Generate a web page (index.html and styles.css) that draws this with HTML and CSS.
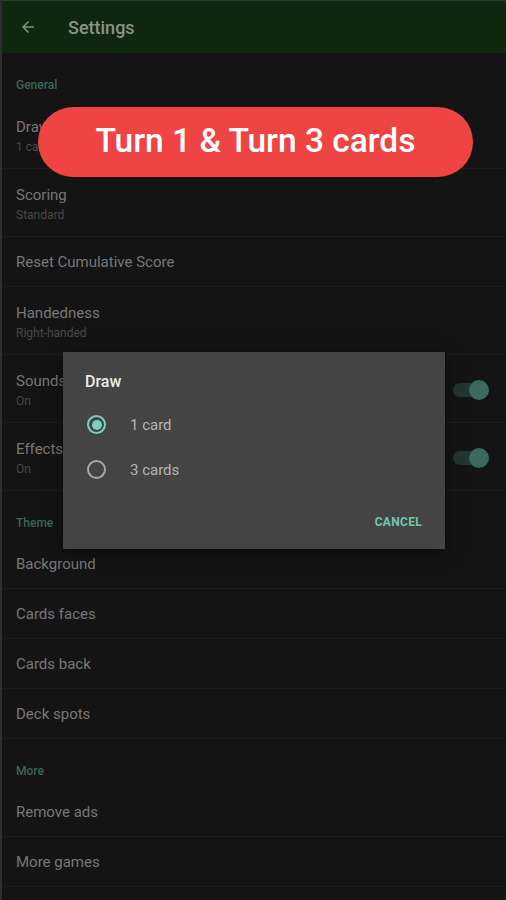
FILE: index.html
```html
<!DOCTYPE html>
<html>
<head>
<meta charset="utf-8">
<link rel="stylesheet" href="styles.css">
</head>
<body>
<div class="screen">
  <header class="appbar">
    <svg class="back" width="18" height="18" viewBox="0 0 24 24"><path d="M20 11H7.83l5.59-5.59L12 4l-8 8 8 8 1.41-1.41L7.83 13H20v-2z" fill="#7c947c"/></svg>
    <span class="title">Settings</span>
  </header>
  <main class="list">
    <div class="cat">General</div>
    <div class="item two"><div class="t">Draw</div><div class="s">1 card</div></div>
    <div class="item two"><div class="t">Scoring</div><div class="s">Standard</div></div>
    <div class="item one"><div class="t">Reset Cumulative Score</div></div>
    <div class="item two"><div class="t">Handedness</div><div class="s">Right-handed</div></div>
    <div class="item two sw"><div class="txt"><div class="t">Sounds</div><div class="s">On</div></div><div class="switch"><span class="knob"></span></div></div>
    <div class="item two sw"><div class="txt"><div class="t">Effects</div><div class="s">On</div></div><div class="switch"><span class="knob"></span></div></div>
    <div class="cat">Theme</div>
    <div class="item one"><div class="t">Background</div></div>
    <div class="item one"><div class="t">Cards faces</div></div>
    <div class="item one"><div class="t">Cards back</div></div>
    <div class="item one"><div class="t">Deck spots</div></div>
    <div class="cat">More</div>
    <div class="item one"><div class="t">Remove ads</div></div>
    <div class="item one"><div class="t">More games</div></div>
  </main>

  <div class="dialog">
    <div class="d-title">Draw</div>
    <div class="opt first"><span class="radio on"></span><span class="lbl">1 card</span></div>
    <div class="opt"><span class="radio"></span><span class="lbl">3 cards</span></div>
    <div class="actions"><span class="btn">CANCEL</span></div>
  </div>

  <div class="banner">Turn 1 &amp; Turn 3 cards</div>
</div>
</body>
</html>
```
FILE: styles.css
```css
* { box-sizing: border-box; }
html, body { margin: 0; padding: 0; background: #141414; }
body { font-family: Roboto, "Noto Sans", "Liberation Sans", sans-serif; }
.screen {
  position: relative;
  width: 506px;
  height: 900px;
  overflow: hidden;
  background: #141414;
  border-left: 2px solid #2e2e2e;
}
.appbar {
  height: 53px;
  background: #0f260f;
  border-top: 1px solid #2a3a2a;
  display: flex;
  align-items: center;
  padding-left: 17px;
}
.back { display: block; }
.appbar .title {
  margin-left: 31px;
  color: #869686;
  font-size: 18px;
  font-weight: 500;
}
.list { display: flex; flex-direction: column; }
.cat {
  height: 48px;
  padding: 25px 0 0 14px;
  font-size: 12px;
  line-height: 14px;
  color: #3d6459;
  font-weight: 500;
}
.item {
  padding: 0 19px 0 14px;
  border-bottom: 1px solid #1d1d1d;
}
.item.two { height: 68px; padding-top: 16px; }
.item.one { height: 50px; display: flex; align-items: center; }
.item.sw { display: flex; justify-content: space-between; align-items: flex-start; }
.t { font-size: 15px; line-height: 20px; color: #787878; }
.s { font-size: 12px; line-height: 16px; color: #484848; margin-top: 2px; }
.switch {
  position: relative;
  width: 34px;
  height: 14px;
  margin-top: 12px;
  border-radius: 7px;
  background: #243430;
}
.knob {
  position: absolute;
  right: -2px;
  top: -3px;
  width: 20px;
  height: 20px;
  border-radius: 50%;
  background: #3a6b5e;
}
.dialog {
  position: absolute;
  left: 61px;
  top: 352px;
  width: 382px;
  height: 197px;
  background: #444444;
  box-shadow: 0 4px 14px rgba(0,0,0,0.5);
  padding: 20px 23px 0 22px;
  display: flex;
  flex-direction: column;
}
.d-title { font-size: 16px; line-height: 20px; font-weight: 500; color: #ececec; }
.opt { display: flex; align-items: center; height: 45px; }
.opt.first { margin-top: 10px; }
.radio {
  width: 19px; height: 19px;
  border-radius: 50%;
  border: 2px solid #a7a7a7;
  margin-left: 2px;
  position: relative;
}
.radio.on { border-color: #79d2bb; }
.radio.on::after {
  content: "";
  position: absolute;
  left: 2.5px; top: 2.5px;
  width: 10px; height: 10px;
  border-radius: 50%;
  background: #79d2bb;
}
.lbl { margin-left: 24px; font-size: 15px; color: #b4b4b4; }
.actions { display: flex; justify-content: flex-end; margin-top: 23px; }
.btn { font-size: 12px; font-weight: 700; color: #6fc6b0; letter-spacing: 0.3px; }
.banner {
  position: absolute;
  left: 36px;
  top: 107px;
  width: 435px;
  height: 70px;
  padding-bottom: 3px;
  border-radius: 35px;
  background: #ef4444;
  color: #fff;
  font-size: 33.5px;
  font-weight: 500;
  display: flex;
  align-items: center;
  justify-content: center;
}
```
